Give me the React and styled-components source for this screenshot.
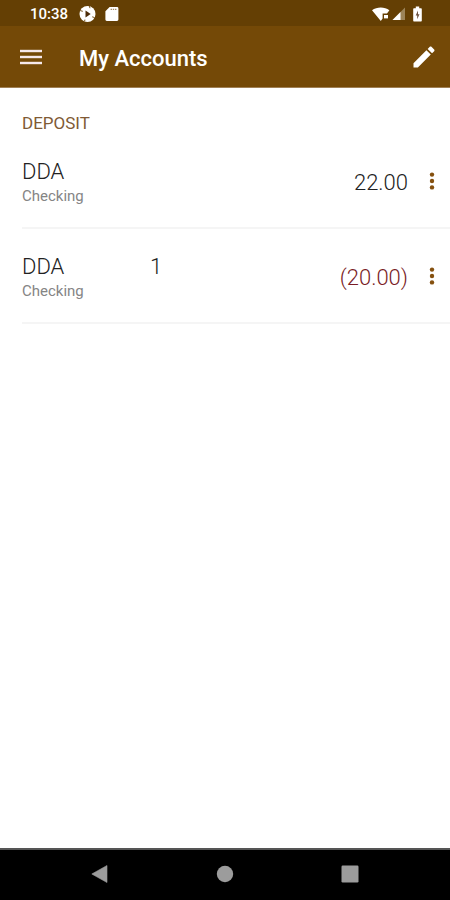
import React from 'react';
import styled, { createGlobalStyle } from 'styled-components';

const GlobalStyle = createGlobalStyle`
  * {
    box-sizing: border-box;
  }

  body {
    margin: 0;
    background-color: #fff;
    font-family: Roboto, 'Liberation Sans', sans-serif;
  }
`;

const Screen = styled.div`
  display: flex;
  flex-direction: column;
  min-height: 100vh;
`;

const StatusBar = styled.div`
  display: flex;
  align-items: center;
  justify-content: space-between;
  height: 26px;
  padding: 2px 26px 0 30px;
  background-color: #643f04;
  color: #fff;
`;

const StatusGroup = styled.div`
  display: flex;
  align-items: center;
  gap: ${props => props.$gap};
`;

const Time = styled.span`
  width: 40px;
  font-size: 15px;
  font-weight: 500;
  line-height: 20px;
`;

const AppBar = styled.header`
  display: flex;
  align-items: center;
  height: 62px;
  padding: 0 10px 0 15px;
  border-bottom: 1px solid #a08055;
  background-color: #744907;
  color: #fff;
`;

const Title = styled.h1`
  flex: 1;
  margin: 0 0 0 32px;
  padding-top: 4px;
  font-size: 22px;
  font-weight: 500;
  line-height: 28px;
`;

const IconButton = styled.button`
  display: flex;
  align-items: center;
  justify-content: center;
  width: 32px;
  height: 40px;
  padding: 0;
  border: 0;
  background: none;
  color: ${props => props.$color || '#fff'};
  cursor: pointer;
`;

const Accounts = styled.main`
  flex: 1;
  padding: 24px 0 0 22px;
`;

const SectionTitle = styled.h2`
  margin: 0;
  color: #805a35;
  font-size: 17px;
  font-weight: 400;
  line-height: 22px;
`;

const List = styled.ul`
  margin: 0;
  padding: 0;
  list-style: none;
`;

const Row = styled.li`
  display: flex;
  align-items: center;
  height: 95px;
  padding-right: 2px;
  border-bottom: 2px solid #f5f5f5;
`;

const Details = styled.div`
  flex: 1;
  padding-top: 4px;
`;

const Name = styled.div`
  display: grid;
  grid-template-columns: 128px 1fr;
  color: #222;
  font-size: 22px;
  font-weight: 300;
  line-height: 26px;
`;

const Type = styled.div`
  color: #858585;
  font-size: 15px;
  line-height: 22px;
`;

const Amount = styled.div`
  margin-right: 8px;
  padding-top: 4px;
  color: ${props => props.$negative ? '#7a1c26' : '#222'};
  font-size: 22px;
  font-weight: 300;
  line-height: 28px;
`;

const NavBar = styled.nav`
  display: grid;
  grid-template-columns: repeat(3, 1fr);
  align-items: center;
  justify-items: center;
  height: 52px;
  padding: 0 38px 2px;
  border-top: 2px solid #555;
  background-color: #000;
`;

const accounts = [
  { id: 1, name: 'DDA', number: '', type: 'Checking', balance: 22 },
  { id: 2, name: 'DDA', number: '1', type: 'Checking', balance: -20 },
];

const formatBalance = (balance) => {
  const value = Math.abs(balance).toFixed(2);
  return balance < 0 ? `(${value})` : value;
}

const App = () => {
  return (
    <Screen>
      <GlobalStyle />
      <StatusBar>
        <StatusGroup $gap="9px">
          <Time>10:38</Time>
          <SyncIcon />
          <CardIcon />
        </StatusGroup>
        <StatusGroup $gap="2px">
          <WifiIcon />
          <SignalIcon />
          <BatteryIcon />
        </StatusGroup>
      </StatusBar>
      <AppBar>
        <IconButton aria-label="Menu"><MenuIcon /></IconButton>
        <Title>My Accounts</Title>
        <IconButton aria-label="Edit"><PencilIcon /></IconButton>
      </AppBar>
      <Accounts>
        <SectionTitle>DEPOSIT</SectionTitle>
        <List>
          {accounts.map(account => (
            <AccountRow key={account.id} {...account} />
          ))}
        </List>
      </Accounts>
      <NavBar>
        <IconButton $color="#9c9c9c" aria-label="Back">
          <svg width="18" height="18" viewBox="0 0 18 18" fill="currentColor">
            <path d="M.8 9 16 .5v17z" stroke="currentColor" strokeWidth=".6" strokeLinejoin="round" />
          </svg>
        </IconButton>
        <IconButton $color="#9c9c9c" aria-label="Home">
          <svg width="18" height="18" viewBox="0 0 18 18" fill="currentColor">
            <circle cx="9" cy="9" r="8.2" />
          </svg>
        </IconButton>
        <IconButton $color="#9c9c9c" aria-label="Recent apps">
          <svg width="18" height="18" viewBox="0 0 18 18" fill="currentColor">
            <rect x=".5" y=".5" width="17" height="17" rx="1.2" />
          </svg>
        </IconButton>
      </NavBar>
    </Screen>
  )
}

export default App;

const AccountRow = (props) => {
  return (
    <Row>
      <Details>
        <Name>
          <span>{props.name}</span>
          <span>{props.number}</span>
        </Name>
        <Type>{props.type}</Type>
      </Details>
      <Amount $negative={props.balance < 0}>{formatBalance(props.balance)}</Amount>
      <IconButton $color="#85500f" aria-label="Account options"><MoreIcon /></IconButton>
    </Row>
  )
}

const SyncIcon = () => (
  <svg width="17" height="18" viewBox="0 0 17 18">
    <circle cx="8.5" cy="9" r="8" fill="#fff" />
    <path d="M6.5 5.4v7.2l5.2-3.6z" fill="#4d2c08" />
    <path d="M1.2 5.6l2.6.7M10.4 1.2l.6 2M15.6 12.6l-2.4-.8M5.6 16.4l.3-1.8" stroke="#643f04" strokeWidth=".9" />
  </svg>
)

const CardIcon = () => (
  <svg width="14" height="16" viewBox="0 0 14 16">
    <path d="M4.6 1H12a1.4 1.4 0 0 1 1.4 1.4v11.2A1.4 1.4 0 0 1 12 15H1.8A1.4 1.4 0 0 1 .4 13.6V5.2z" fill="#fff" />
    <path d="M5.6 3.4h6" stroke="#a58c68" strokeWidth="1.2" strokeDasharray="1.4 .8" />
  </svg>
)

const WifiIcon = () => (
  <svg width="18" height="16" viewBox="0 0 18 16">
    <path d="M0 4.3C5 .6 12.5.6 17.4 4.3L15 7.4h-4.4v5.2L8.800 15z" fill="#fff" />
    <path d="M12 9h4v3.4h-4z" fill="#fff" />
  </svg>
)

const SignalIcon = () => (
  <svg width="14" height="16" viewBox="0 0 14 16">
    <path d="M13 1.5V14H.5z" fill="#9b8358" />
    <path d="M8.500 6V14H.5z" fill="#fff" />
  </svg>
)

const BatteryIcon = () => (
  <svg width="16" height="18" viewBox="0 0 16 18">
    <path d="M7.800 1.500h3.400v1.700h1.600c.6 0 1 .4 1 1v11.200c0 .6-.4 1-1 1H6.200c-.6 0-1-.4-1-1V4.200c0-.6.4-1 1-1h1.600z" fill="#fff" />
    <path d="M10 5.400 7.700 10.400h1.500v3.800l2.300-5H10z" fill="#6b5140" />
  </svg>
)

const MenuIcon = () => (
  <svg width="22" height="16" viewBox="0 0 22 16" fill="#f6e8ea">
    <rect x="0" y=".8" width="22" height="2.4" />
    <rect x="0" y="6.8" width="22" height="2.4" />
    <rect x="0" y="12.8" width="22" height="2.4" />
  </svg>
)

const PencilIcon = () => (
  <svg width="28" height="28" viewBox="0 0 24 24" fill="currentColor">
    <path d="M3 17.25V21h3.75L17.81 9.94l-3.75-3.75L3 17.25zM20.71 7.04c.39-.39.39-1.02 0-1.41l-2.34-2.34c-.39-.39-1.02-.39-1.41 0l-1.83 1.83 3.75 3.75 1.83-1.83z" />
  </svg>
)

const MoreIcon = () => (
  <svg width="6" height="20" viewBox="0 0 6 20" fill="currentColor">
    <circle cx="3" cy="3.600" r="2.200" />
    <circle cx="3" cy="10" r="2.200" />
    <circle cx="3" cy="16.400" r="2.200" />
  </svg>
)
